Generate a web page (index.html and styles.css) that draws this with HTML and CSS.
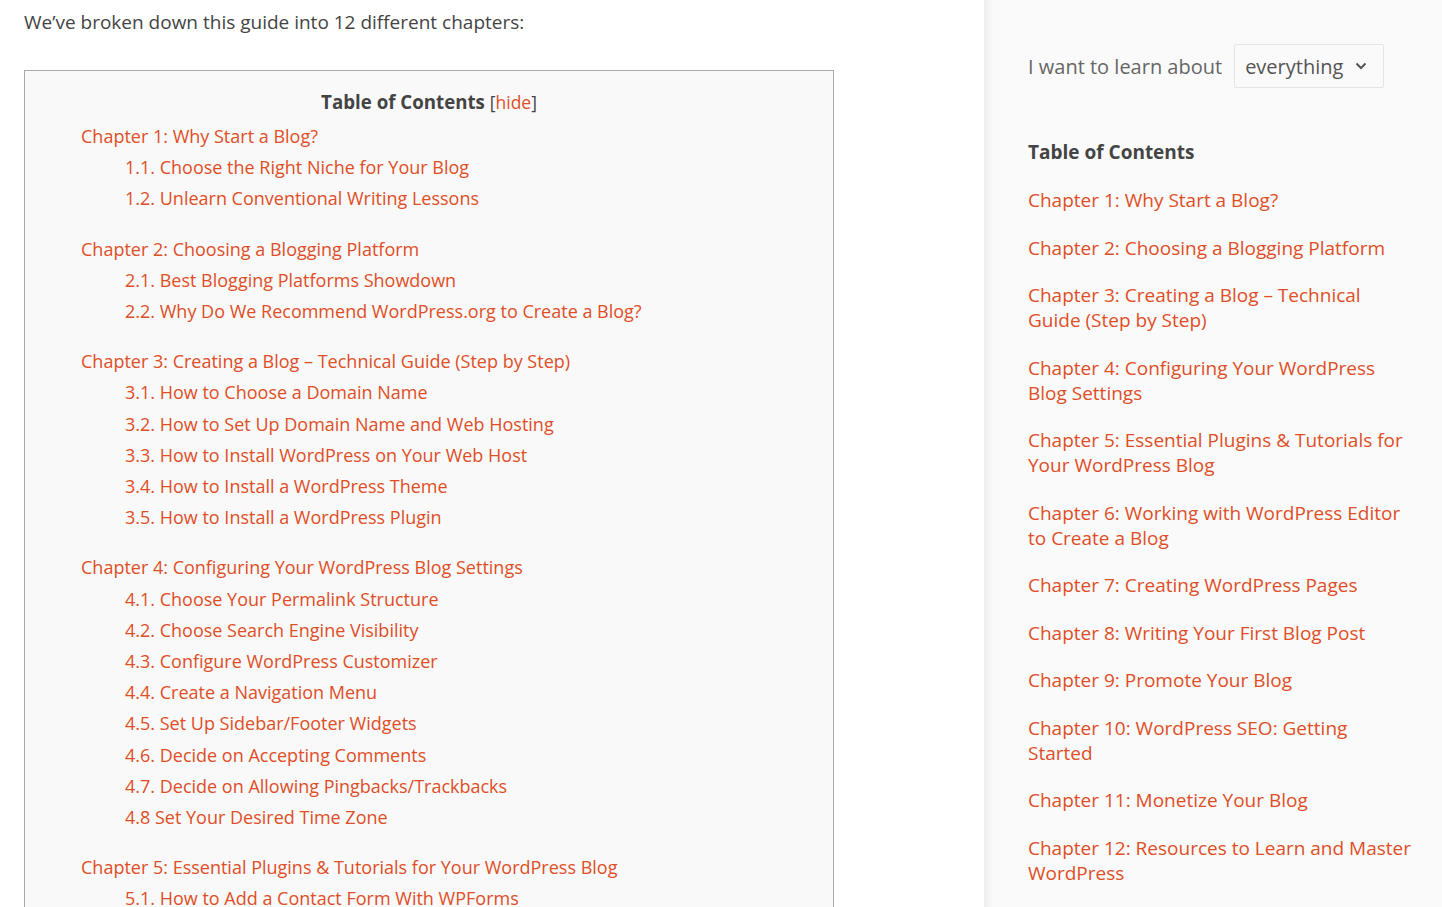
FILE: index.html
```html
<!DOCTYPE html>
<html lang="en">
<head>
  <meta charset="UTF-8">
  <title>How to Start a Blog</title>
  <link rel="stylesheet" href="styles.css">
</head>
<body>
  <div class="page">
    <main class="content">
      <p class="intro">We’ve broken down this guide into 12 different chapters:</p>

      <div class="toc">
        <p class="toc-title">Table of Contents <span class="toc-toggle">[<a href="#">hide</a>]</span></p>
        <ul class="toc-list">
          <li><a href="#">Chapter 1: Why Start a Blog?</a>
            <ul>
              <li><a href="#">1.1. Choose the Right Niche for Your Blog</a></li>
              <li><a href="#">1.2. Unlearn Conventional Writing Lessons</a></li>
            </ul>
          </li>
          <li><a href="#">Chapter 2: Choosing a Blogging Platform</a>
            <ul>
              <li><a href="#">2.1. Best Blogging Platforms Showdown</a></li>
              <li><a href="#">2.2. Why Do We Recommend WordPress.org to Create a Blog?</a></li>
            </ul>
          </li>
          <li><a href="#">Chapter 3: Creating a Blog – Technical Guide (Step by Step)</a>
            <ul>
              <li><a href="#">3.1. How to Choose a Domain Name</a></li>
              <li><a href="#">3.2. How to Set Up Domain Name and Web Hosting</a></li>
              <li><a href="#">3.3. How to Install WordPress on Your Web Host</a></li>
              <li><a href="#">3.4. How to Install a WordPress Theme</a></li>
              <li><a href="#">3.5. How to Install a WordPress Plugin</a></li>
            </ul>
          </li>
          <li><a href="#">Chapter 4: Configuring Your WordPress Blog Settings</a>
            <ul>
              <li><a href="#">4.1. Choose Your Permalink Structure</a></li>
              <li><a href="#">4.2. Choose Search Engine Visibility</a></li>
              <li><a href="#">4.3. Configure WordPress Customizer</a></li>
              <li><a href="#">4.4. Create a Navigation Menu</a></li>
              <li><a href="#">4.5. Set Up Sidebar/Footer Widgets</a></li>
              <li><a href="#">4.6. Decide on Accepting Comments</a></li>
              <li><a href="#">4.7. Decide on Allowing Pingbacks/Trackbacks</a></li>
              <li><a href="#">4.8 Set Your Desired Time Zone</a></li>
            </ul>
          </li>
          <li><a href="#">Chapter 5: Essential Plugins &amp; Tutorials for Your WordPress Blog</a>
            <ul>
              <li><a href="#">5.1. How to Add a Contact Form With WPForms</a></li>
            </ul>
          </li>
        </ul>
      </div>
    </main>

    <aside class="sidebar">
      <div class="learn">
        <span class="learn-label">I want to learn about</span>
        <div class="learn-select">everything
          <svg class="chevron" width="12" height="8" viewBox="0 0 12 8"><path d="M1.5 1.5 L6 6 L10.5 1.5" fill="none" stroke="#555" stroke-width="2"/></svg>
        </div>
      </div>

      <h3 class="side-title">Table of Contents</h3>
      <ul class="side-list">
        <li><a href="#">Chapter 1: Why Start a Blog?</a></li>
        <li><a href="#">Chapter 2: Choosing a Blogging Platform</a></li>
        <li><a href="#">Chapter 3: Creating a Blog – Technical Guide (Step by Step)</a></li>
        <li><a href="#">Chapter 4: Configuring Your WordPress Blog Settings</a></li>
        <li><a href="#">Chapter 5: Essential Plugins &amp; Tutorials for Your WordPress Blog</a></li>
        <li><a href="#">Chapter 6: Working with WordPress Editor to Create a Blog</a></li>
        <li><a href="#">Chapter 7: Creating WordPress Pages</a></li>
        <li><a href="#">Chapter 8: Writing Your First Blog Post</a></li>
        <li><a href="#">Chapter 9: Promote Your Blog</a></li>
        <li><a href="#">Chapter 10: WordPress SEO: Getting Started</a></li>
        <li><a href="#">Chapter 11: Monetize Your Blog</a></li>
        <li><a href="#">Chapter 12: Resources to Learn and Master WordPress</a></li>
      </ul>
    </aside>
  </div>
</body>
</html>
```

FILE: styles.css
```css
/* Base */
body {
  margin: 0;
  font-family: "Open Sans", "Noto Sans", sans-serif;
  color: #444;
  background: #fff;
  height: 907px;
  overflow: hidden;
}

a {
  color: #e04e26;
  text-decoration: none;
}

ul {
  list-style: none;
  margin: 0;
  padding: 0;
}

.page {
  display: flex;
  min-height: 907px;
}

/* Main column */
.content {
  width: 960px;
  padding: 7px 0 0 24px;
  flex-shrink: 0;
}

.intro {
  margin: 0 0 33px;
  font-size: 19px;
  line-height: 30px;
}

.toc {
  width: 808px;
  border: 1px solid #aaa;
  background: #f9f9f9;
  padding: 16px 0 0;
  font-size: 18px;
}

.toc-title {
  margin: 0 0 4px;
  text-align: center;
  font-size: 18.7px;
  font-weight: 700;
  line-height: 29px;
}

.toc-toggle {
  font-weight: 400;
  font-size: 17.5px;
}

.toc-list {
  padding-left: 56px;
}

.toc-list > li {
  margin-bottom: 19px;
}

.toc-list li {
  line-height: 31.2px;
}

.toc-list ul {
  padding-left: 44px;
}

/* Sidebar */
.sidebar {
  flex: 1;
  background: #fafafa;
  box-shadow: inset 10px 0 10px -8px rgba(0, 0, 0, .08);
  padding: 44px 20px 0 44px;
}

.learn {
  display: flex;
  align-items: center;
  gap: 12px;
  font-size: 20px;
  color: #666;
}

.learn-select {
  display: flex;
  align-items: center;
  gap: 12px;
  height: 42px;
  padding: 0 16px 0 10px;
  border: 1px solid #e5e5e5;
  border-radius: 2px;
  background: #fafafa;
  color: #555;
}

.side-title {
  margin: 52px 0 23px;
  font-size: 19px;
  font-weight: 700;
  line-height: 25px;
  color: #444;
}

.side-list {
  width: 386px;
  font-size: 19px;
}

.side-list li {
  line-height: 25px;
  margin-bottom: 22.5px;
}
```
